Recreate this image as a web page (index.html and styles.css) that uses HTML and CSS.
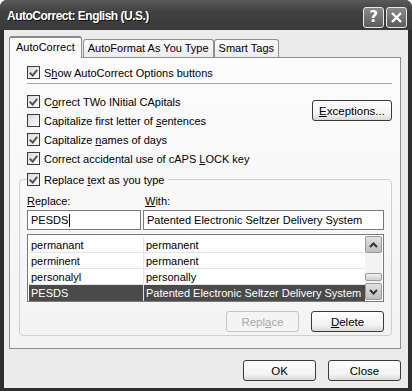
FILE: index.html
```html
<!DOCTYPE html>
<html lang="en">
<head>
    <meta charset="UTF-8">
    <title>AutoCorrect: English (U.S.)</title>
    <link rel="stylesheet" href="styles.css">
</head>
<body>
    <div class="window">
        <div class="titlebar">
            <span class="title">AutoCorrect: English (U.S.)</span>
            <div class="caption-buttons">
                <span class="cap-btn">?</span>
                <span class="cap-btn">
                    <svg width="13" height="13" viewBox="0 0 13 13"><path d="M2 2 L11 11 M11 2 L2 11" stroke="#fff" stroke-width="2.4"/></svg>
                </span>
            </div>
        </div>
        <div class="client">
            <div class="tabs">
                <span class="tab active">AutoCorrect</span>
                <span class="tab">AutoFormat As You Type</span>
                <span class="tab">Smart Tags</span>
            </div>
            <div class="panel">
                <label class="check first"><span class="box on"></span><span>S<u>h</u>ow AutoCorrect Options buttons</span></label>
                <div class="separator"></div>
                <div class="options">
                    <div class="option-list">
                        <label class="check"><span class="box on"></span><span>C<u>o</u>rrect TWo INitial CApitals</span></label>
                        <label class="check"><span class="box"></span><span>Capitalize first letter of <u>s</u>entences</span></label>
                        <label class="check"><span class="box on"></span><span>Capitalize <u>n</u>ames of days</span></label>
                        <label class="check"><span class="box on"></span><span>Correct accidental use of cAPS <u>L</u>OCK key</span></label>
                    </div>
                    <span class="button exceptions"><span><u>E</u>xceptions...</span></span>
                </div>
                <fieldset class="group">
                    <legend><label class="check"><span class="box on"></span><span>Replace <u>t</u>ext as you type</span></label></legend>
                    <div class="labels">
                        <span class="lbl-replace"><u>R</u>eplace:</span>
                        <span class="lbl-with"><u>W</u>ith:</span>
                    </div>
                    <div class="inputs">
                        <div class="field replace-field">PESDS<span class="caret"></span></div>
                        <div class="field with-field">Patented Electronic Seltzer Delivery System</div>
                    </div>
                    <div class="list">
                        <div class="rows">
                            <div class="row"><span class="c1">permanant</span><span class="c2">permanent</span></div>
                            <div class="row"><span class="c1">perminent</span><span class="c2">permanent</span></div>
                            <div class="row"><span class="c1">personalyl</span><span class="c2">personally</span></div>
                            <div class="row selected"><span class="c1">PESDS</span><span class="c2">Patented Electronic Seltzer Delivery System</span></div>
                        </div>
                        <div class="scrollbar">
                            <span class="sb-btn">
                                <svg width="9" height="6" viewBox="0 0 9 6"><path d="M1 5 L4.5 1.5 L8 5" stroke="#333" stroke-width="2" fill="none"/></svg>
                            </span>
                            <div class="track"><span class="thumb"></span></div>
                            <span class="sb-btn">
                                <svg width="9" height="6" viewBox="0 0 9 6"><path d="M1 1 L4.5 4.5 L8 1" stroke="#333" stroke-width="2" fill="none"/></svg>
                            </span>
                        </div>
                    </div>
                    <div class="group-buttons">
                        <span class="button disabled"><span>Repl<u>a</u>ce</span></span>
                        <span class="button"><span><u>D</u>elete</span></span>
                    </div>
                </fieldset>
            </div>
            <div class="footer">
                <span class="button">OK</span>
                <span class="button">Close</span>
            </div>
        </div>
    </div>
</body>
</html>
```

FILE: styles.css
```css
body {
    margin: 0;
    font-family: 'Liberation Sans', Arial, sans-serif;
    font-size: 11px;
    color: #000;
    background: #fff;
}

.window {
    width: 412px;
    height: 391px;
    box-sizing: border-box;
    background: #2e2e2e;
    border-radius: 7px 7px 0 0;
    display: flex;
    flex-direction: column;
    overflow: hidden;
}

.titlebar {
    height: 30px;
    flex-shrink: 0;
    display: flex;
    align-items: center;
    justify-content: space-between;
    padding: 0 5px 0 7px;
    background: linear-gradient(#5a5a5a, #404040 40%, #3a3a3a);
}
.title {
    color: #fff;
    font-family: 'Liberation Sans', Arial, sans-serif;
    font-weight: bold;
    font-size: 12px;
    letter-spacing: -0.5px;
    text-shadow: 1px 1px 0 #111;
    margin-top: 2px;
}
.caption-buttons {
    display: flex;
    gap: 2px;
    margin-top: 4px;
}
.cap-btn {
    width: 19px;
    height: 19px;
    border: 1px solid #e8e8e8;
    border-radius: 3px;
    background: linear-gradient(#8a8a8a, #5c5c5c);
    color: #fff;
    font-family: 'DejaVu Sans', sans-serif;
    font-weight: bold;
    font-size: 15px;
    display: flex;
    align-items: center;
    justify-content: center;
}

.client {
    flex: 1;
    margin: 0 4px 3px 4px;
    background: #ebebeb;
    padding: 6px 7px 0 5px;
}

.tabs {
    display: flex;
    align-items: flex-end;
    height: 21px;
    position: relative;
    z-index: 1;
}
.tab {
    height: 18px;
    box-sizing: border-box;
    padding: 2px 4px 0 4px;
    border: 1px solid #8e8e8e;
    border-bottom: none;
    border-radius: 3px 3px 0 0;
    background: linear-gradient(#fcfcfc, #ececec);
    font-size: 11px;
}
.tab.active {
    height: 22px;
    margin-bottom: -1px;
    padding: 3px 6px 0 6px;
    background: #fbfbfb;
    border-top: 2px solid #8a8a8a;
    margin-right: 1px;
}

.panel {
    height: 292px;
    box-sizing: border-box;
    border: 1px solid #8e8e8e;
    background: linear-gradient(#fcfcfc, #f3f3f3);
    padding: 6px 8px 0 17px;
}

.check {
    display: flex;
    align-items: center;
    height: 19px;
    white-space: nowrap;
    font-size: 11px;
}
.check.first {
    height: 17px;
}
.box {
    width: 11px;
    height: 11px;
    border: 1px solid #3c3c3c;
    background: linear-gradient(135deg, #dcdcdc, #fbfbfb);
    margin-right: 4px;
    flex-shrink: 0;
    display: flex;
    align-items: center;
    justify-content: center;
}
.box.on::after {
    content: "";
    width: 3px;
    height: 6px;
    border: solid #555;
    border-width: 0 2px 2px 0;
    transform: rotate(40deg);
    margin-top: -2px;
}

.separator {
    height: 1px;
    background: #a6a6a6;
    margin: 2px 0 8px 0;
}

.options {
    display: flex;
    justify-content: space-between;
}
.option-list {
    display: flex;
    flex-direction: column;
}

.button {
    display: flex;
    align-items: center;
    justify-content: center;
    box-sizing: border-box;
    height: 21px;
    border: 1px solid #3a3a3a;
    border-radius: 3px;
    background: linear-gradient(#ffffff, #f2f2f2 70%, #d9d9d9);
    font-size: 11.5px;
}
.button.exceptions {
    width: 80px;
    margin-top: 8px;
}
.button.disabled {
    color: #a8a8a8;
    border-color: #c4c4c4;
    background: #f4f4f4;
}

.group {
    margin: 2px 0 0 -8px;
    padding: 0 7px 0 7px;
    height: 166px;
    box-sizing: border-box;
    border: 1px solid #cfcfcf;
    border-radius: 4px;
}
.group legend {
    padding: 0 4px 0 0;
    margin-left: 0;
}

.labels {
    display: flex;
    height: 18px;
    align-items: flex-end;
    font-size: 11px;
}
.lbl-replace {
    width: 118px;
}

.inputs {
    display: flex;
    gap: 2px;
    margin-top: 3px;
}
.field {
    height: 20px;
    box-sizing: border-box;
    border: 1px solid #7a7a7a;
    background: #fff;
    display: flex;
    align-items: center;
    padding-left: 3px;
    font-size: 11px;
    white-space: nowrap;
}
.replace-field {
    width: 114px;
}
.with-field {
    flex: 1;
}
.caret {
    width: 1px;
    height: 13px;
    background: #000;
    margin-left: 1px;
}

.list {
    margin-top: 4px;
    height: 68px;
    box-sizing: border-box;
    border: 1px solid #7a7a7a;
    background: #fff;
    display: flex;
    padding: 1px;
}
.rows {
    flex: 1;
    min-width: 0;
    padding-top: 1px;
}
.row {
    display: flex;
    height: 16px;
    box-sizing: border-box;
    border-bottom: 1px solid #e6e6e6;
    align-items: center;
    font-size: 11px;
    white-space: nowrap;
    overflow: hidden;
}
.row .c1 {
    width: 112px;
    flex-shrink: 0;
    padding-left: 2px;
    border-right: 1px solid #e6e6e6;
    height: 100%;
    display: flex;
    align-items: center;
}
.row .c2 {
    padding-left: 2px;
}
.row.selected {
    background: #4a4a4a;
    color: #fff;
    border-bottom: none;
}
.row.selected .c1 {
    border-right-color: #ddd;
}

.scrollbar {
    width: 17px;
    display: flex;
    flex-direction: column;
    background: #f3f3f3;
}
.sb-btn {
    height: 17px;
    box-sizing: border-box;
    border: 1px solid #9a9a9a;
    border-radius: 2px;
    background: linear-gradient(#e2e2e2, #bdbdbd);
    display: flex;
    align-items: center;
    justify-content: center;
}
.track {
    flex: 1;
    display: flex;
    align-items: flex-end;
    padding-bottom: 2px;
}
.thumb {
    width: 100%;
    height: 8px;
    box-sizing: border-box;
    border: 1px solid #9a9a9a;
    border-radius: 2px;
    background: linear-gradient(#f2f2f2, #cfcfcf);
}

.group-buttons {
    display: flex;
    justify-content: flex-end;
    gap: 12px;
    margin-top: 9px;
}
.group-buttons .button {
    width: 73px;
}

.footer {
    display: flex;
    justify-content: flex-end;
    gap: 12px;
    margin-top: 11px;
}
.footer .button {
    width: 73px;
}
```
